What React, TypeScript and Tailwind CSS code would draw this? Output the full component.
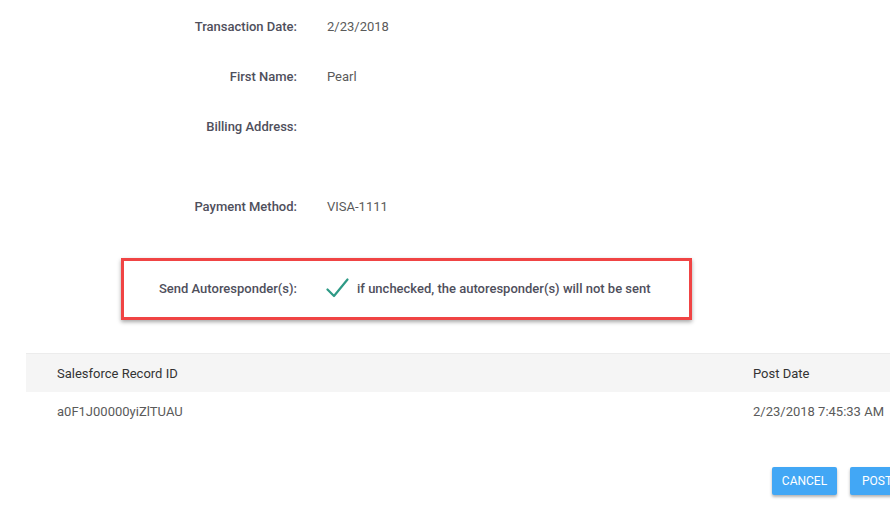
import * as React from "react"

const fields: { label: string; value: string; tall?: boolean }[] = [
	{ label: "Transaction Date:", value: "2/23/2018" },
	{ label: "First Name:", value: "Pearl" },
	{ label: "Billing Address:", value: "", tall: true },
	{ label: "Payment Method:", value: "VISA-1111" },
]

function Check() {
	return (
		<svg width="23" height="20" viewBox="0 0 23 20" fill="none">
			<path d="M1.5 11.5 L8 18 L21.5 1.5" stroke="#2e9a86" strokeWidth="2.2" strokeLinecap="round" strokeLinejoin="round" />
		</svg>
	)
}

export default function App() {
	return (
		<div className="h-[511px] w-[890px] overflow-hidden bg-white font-['Roboto',sans-serif] text-[13px]">
			<div className="w-[930px]">
				<div className="flex flex-col pt-[18px]">
					{fields.map((f) => (
						<div key={f.label} className={f.tall ? "flex h-[80px]" : "flex h-[50px]"}>
							<div className="w-[297px] text-right leading-[18px] font-medium text-[#4f4f5c]">{f.label}</div>
							<div className="pl-[30px] leading-[18px] text-[#5a5a5a]">{f.value}</div>
						</div>
					))}
				</div>

				<div className="ml-[121px] mt-[10px] flex h-[62px] w-[571px] items-center border-[3px] border-[#f04444] shadow-[0_2px_4px_rgba(0,0,0,0.35)]">
					<div className="w-[173px] text-right leading-[18px] font-medium text-[#4f4f5c]">Send Autoresponder(s):</div>
					<div className="ml-[29px] mb-[2px]">
						<Check />
					</div>
					<div className="ml-[8px] leading-[18px] font-medium text-[#4f4f5c]">if unchecked, the autoresponder(s) will not be sent</div>
				</div>

				<div className="ml-[26px] mt-[33px] w-[880px]">
					<div className="flex h-[39px] items-center border-t border-[#ececec] bg-[#f5f5f5] pt-[1px] text-[#333]">
						<div className="w-[727px] pl-[31px]">Salesforce Record ID</div>
						<div>Post Date</div>
					</div>
					<div className="flex h-[38px] items-center pt-[1px] text-[#5a5a5a]">
						<div className="w-[727px] pl-[31px]">a0F1J00000yiZlTUAU</div>
						<div>2/23/2018 7:45:33 AM</div>
					</div>
				</div>

				<div className="mt-[37px] flex justify-end gap-[13px] pr-[26px]">
					<button className="h-[28px] w-[65px] rounded-[2px] bg-[#42a7f5] text-[12px] text-white uppercase shadow-[0_2px_3px_rgba(0,0,0,0.3)]">Cancel</button>
					<button className="h-[28px] w-[54px] rounded-[2px] bg-[#42a7f5] text-[12px] text-white uppercase shadow-[0_2px_3px_rgba(0,0,0,0.3)]">Post</button>
				</div>
			</div>
		</div>
	)
}
